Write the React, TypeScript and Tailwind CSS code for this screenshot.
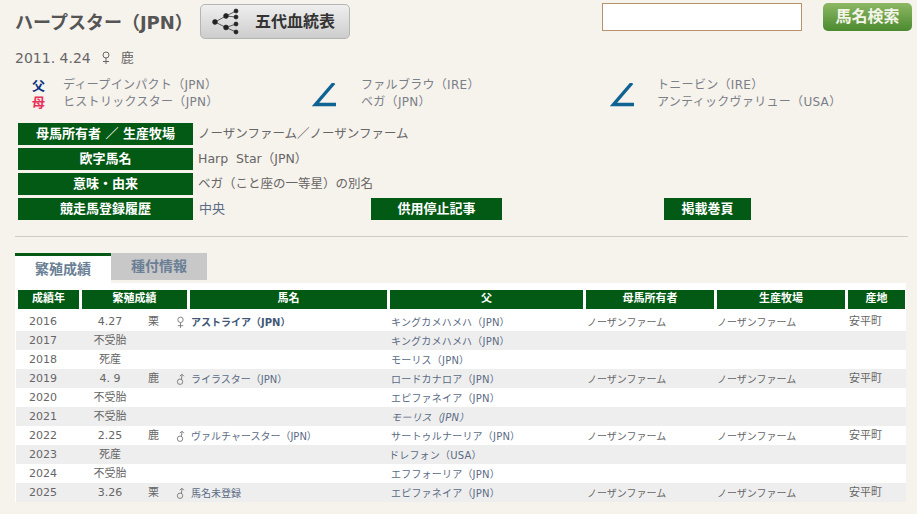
const font = "font-['DejaVu_Sans','Noto_Sans_CJK_JP',sans-serif]";

const Green = ({ w, ml, children }: { w: string; ml?: string; children: React.ReactNode }) => (
  <div className={`${w} ${ml ?? ""} h-[22px] bg-[#035a14] text-white text-[13px] font-bold flex items-center justify-center shrink-0 whitespace-pre`}>{children}</div>
);

const Female = ({ className = "" }: { className?: string }) => (
  <svg viewBox="0 0 10 14" className={className} fill="none" stroke="currentColor" strokeWidth="1">
    <circle cx="5" cy="4" r="3" />
    <path d="M5 7V13M2 10.5H8" />
  </svg>
);
const Male = ({ className = "" }: { className?: string }) => (
  <svg viewBox="0 0 10 14" className={className} fill="none" stroke="currentColor" strokeWidth="1">
    <circle cx="4.5" cy="9.5" r="3" />
    <path d="M6 6.8L6.8 1.5M4.2 3.2L6.8 1.2L8.8 3.4" />
  </svg>
);

const Angle = () => (
  <svg viewBox="0 0 26 26" className="w-[26px] h-[26px] shrink-0" fill="none" stroke="#0f6393" strokeWidth="3.4">
    <path d="M23 0L4.5 21.5H25" />
  </svg>
);

const cols = "grid grid-cols-[61px_105px_197px_193px_128px_128px_57px] gap-x-[3px]";
const head = ["成績年", "繁殖成績", "馬名", "父", "母馬所有者", "生産牧場", "産地"];
type Row = [string, string, string, "f" | "m" | "", string, string, boolean?];
const rows: Row[] = [
  ["2016", "4.27", "栗", "f", "アストライア（JPN）", "キングカメハメハ（JPN）", true],
  ["2017", "不受胎", "", "", "", "キングカメハメハ（JPN）"],
  ["2018", "死産", "", "", "", "モーリス（JPN）"],
  ["2019", "4. 9", "鹿", "m", "ライラスター（JPN）", "ロードカナロア（JPN）", true],
  ["2020", "不受胎", "", "", "", "エピファネイア（JPN）"],
  ["2021", "不受胎", "", "", "", "モーリス（JPN）"],
  ["2022", "2.25", "鹿", "m", "ヴァルチャースター（JPN）", "サートゥルナーリア（JPN）", true],
  ["2023", "死産", "", "", "", "ドレフォン（USA）"],
  ["2024", "不受胎", "", "", "", "エフフォーリア（JPN）"],
  ["2025", "3.26", "栗", "m", "馬名未登録", "エピファネイア（JPN）", true],
];

export default function App() {
  return (
    <div className={`${font} w-[917px] h-[514px] overflow-hidden bg-[#f6f2ec] text-[#666] relative`}>
      <div className="flex items-start pt-[3px] pl-[15px]">
        <h1 className="text-[18px] font-bold text-[#555] leading-[22px] mt-[9px] w-[185px] whitespace-nowrap">ハープスター（JPN）</h1>
        <div className="w-[150px] h-[35px] mt-[1px] rounded-[5px] border border-[#b5b5b5] bg-gradient-to-b from-[#efefef] to-[#cdcdcd] flex items-center pl-[11px] gap-[15px]">
          <svg viewBox="0 0 28 28" className="w-[28px] h-[28px] mt-[1px]" fill="#222" stroke="#222" strokeWidth="0.7">
            <circle cx="3" cy="14" r="2.4" /><circle cx="14" cy="8" r="2.4" /><circle cx="14" cy="19.5" r="2.4" />
            <circle cx="24" cy="3" r="2" /><circle cx="24" cy="9" r="2" /><circle cx="24" cy="16" r="2" /><circle cx="24" cy="24" r="2" />
            <path d="M3 14L14 8M3 14L14 19.5M14 8L24 3M14 8L24 9M14 19.5L24 16M14 19.5L24 24" fill="none" />
          </svg>
          <span className="text-[16px] font-bold text-[#333]">五代血統表</span>
        </div>
        <input aria-label="馬名" className="ml-[252px] w-[200px] h-[28px] bg-white border border-[#b8926a] outline-none" />
        <div className="ml-[21px] w-[89px] h-[28px] rounded-[5px] bg-gradient-to-b from-[#8db864] to-[#4a8a2f] text-[#f4f4e8] text-[16px] font-bold flex items-center justify-center">馬名検索</div>
      </div>

      <div className="flex items-center pl-[15px] mt-[9px] text-[14px] leading-[20px] h-[20px] text-[#666]">
        <span>2011. 4.24</span>
        <Female className="w-[10px] h-[14px] ml-[10px] text-[#666]" />
        <span className="ml-[10px] text-[13px]">鹿</span>
      </div>

      <div className="flex mt-[9px] text-[12px] leading-[17px] tracking-[0.3px] text-[#7a7f88]">
        <div className="w-[63px] pl-[32px] font-bold text-[13px]">
          <div className="text-[#0a2f80]">父</div>
          <div className="text-[#e8305a]">母</div>
        </div>
        <div className="w-[248px] whitespace-nowrap">
          <div>ディープインパクト（JPN）</div>
          <div>ヒストリックスター（JPN）</div>
        </div>
        <div className="w-[50px] pt-[6px]"><Angle /></div>
        <div className="w-[248px] whitespace-nowrap">
          <div>ファルブラウ（IRE）</div>
          <div>ベガ（JPN）</div>
        </div>
        <div className="w-[48px] pt-[6px]"><Angle /></div>
        <div className="whitespace-nowrap">
          <div>トニービン（IRE）</div>
          <div>アンティックヴァリュー（USA）</div>
        </div>
      </div>

      <div className="pl-[18px] mt-[12px] flex flex-col gap-[3px] text-[12.5px] text-[#666]">
        <div className="flex items-center gap-[5px]"><Green w="w-[175px]">母馬所有者 ／ 生産牧場</Green><span>ノーザンファーム／ノーザンファーム</span></div>
        <div className="flex items-center gap-[5px]"><Green w="w-[175px]">欧字馬名</Green><span className="whitespace-pre">Harp  Star（JPN）</span></div>
        <div className="flex items-center gap-[5px]"><Green w="w-[175px]">意味・由来</Green><span>ベガ（こと座の一等星）の別名</span></div>
        <div className="flex items-center">
          <Green w="w-[175px]">競走馬登録履歴</Green>
          <span className="ml-[6px] w-[172px] text-[13px] text-[#5a6b85]">中央</span>
          <Green w="w-[131px]">供用停止記事</Green>
          <Green w="w-[87px]" ml="ml-[162px]">掲載巻頁</Green>
        </div>
      </div>

      <div className="ml-[15px] w-[893px] mt-[16px] border-t border-[#cfcdc8]" />

      <div className="flex pl-[15px] mt-[16px] h-[30px] text-[14px] font-bold">
        <div className="w-[96px] h-[30px] border-t-[3px] border-[#035a14] bg-white text-[#6b7f95] flex items-center justify-center">繁殖成績</div>
        <div className="w-[96px] h-[27px] bg-[#c8c8c8] text-[#6b7f95] flex items-center justify-center">種付情報</div>
      </div>

      <div className="ml-[15px] w-[891px] bg-white">
        <div className={`${cols} pl-[3px] pt-[7px] pb-[3px]`}>
          {head.map((h) => (
            <div key={h} className="h-[19px] bg-[#035a14] text-white text-[11px] font-bold flex items-center justify-center">{h}</div>
          ))}
        </div>
        {rows.map((r, i) => (
          <div key={r[0]} className={`flex h-[19px] ml-[1px] pt-[1px] items-center text-[10px] text-[#666] whitespace-nowrap ${i % 2 === 1 ? "bg-[#eeeeee]" : "bg-white"}`}>
            <div className="w-[64px] pl-[13px] text-[11px]">{r[0]}</div>
            <div className="w-[60px] text-center text-[11px]">{r[1]}</div>
            <div className="w-[29px] pl-[8px] text-[11px]">{r[2]}</div>
            <div className="w-[22px] flex justify-center text-[#777]">
              {r[3] === "f" && <Female className="w-[9px] h-[13px]" />}
              {r[3] === "m" && <Male className="w-[9px] h-[13px]" />}
            </div>
            <div className={`w-[200px] ${i === 0 ? "font-bold text-[#3f5878]" : "text-[#5a6b85]"}`}>{r[4]}</div>
            <div className={`w-[196px] tracking-[0.2px] text-[#5a6b85] ${i === 5 ? "italic" : ""} ${i === 7 ? "-ml-[2px] w-[198px]" : ""}`}>{r[5]}</div>
            <div className="w-[130px]">{r[6] ? "ノーザンファーム" : ""}</div>
            <div className="w-[132px]">{r[6] ? "ノーザンファーム" : ""}</div>
            <div className="text-[11px] text-[#666]">{r[6] ? "安平町" : ""}</div>
          </div>
        ))}
      </div>
    </div>
  );
}
